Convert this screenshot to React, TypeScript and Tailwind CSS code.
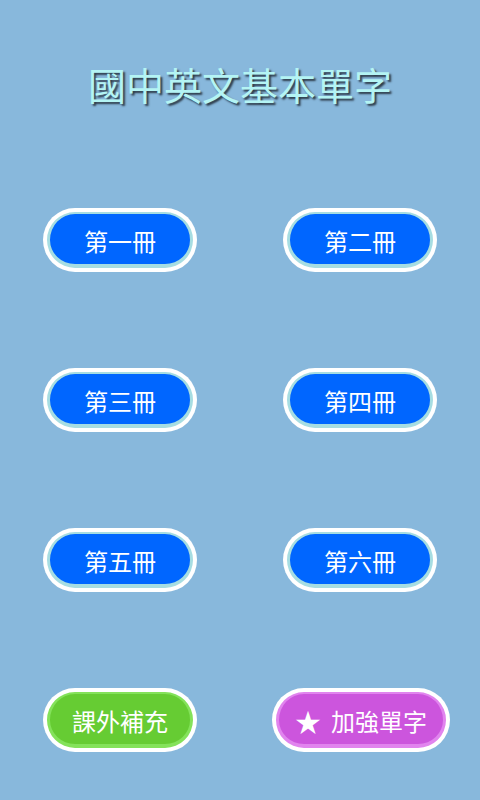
import React from 'react';

const books = ['第一冊', '第二冊', '第三冊', '第四冊', '第五冊', '第六冊'];

const PillButton = ({
  label,
  ring,
  fill,
  width = 'w-[154px]',
}: {
  label: React.ReactNode;
  ring: string;
  fill: string;
  width?: string;
}) => {
  return (
    <button className={`${width} h-[64px] rounded-full bg-white p-[4px]`}>
      <div
        className={`h-full w-full rounded-full border-x-[3px] border-t-[2px] border-b-[4px] ${ring} ${fill} flex items-center justify-center pt-[3px] text-white text-[24px] leading-none`}
      >
        {label}
      </div>
    </button>
  );
};

export default function App() {
  return (
    <div
      className="w-[480px] h-[800px] bg-[#88b8dc] flex flex-col items-center overflow-hidden"
      style={{ fontFamily: '"Noto Sans CJK TC", "Noto Sans", sans-serif' }}
    >
      <h1 className="mt-[65px] h-[40px] text-[38px] leading-none text-[#b4f4f4] [text-shadow:2px_2px_2px_#2c3a48]">
        國中英文基本單字
      </h1>

      <div className="mt-[103px] grid grid-cols-2 w-full gap-y-[96px]">
        {books.map((b) => (
          <div key={b} className="flex justify-center">
            <PillButton label={b} ring="border-[#a6dde2]" fill="bg-[#0066ff]" />
          </div>
        ))}
        <div className="flex justify-center">
          <PillButton label="課外補充" ring="border-[#84e25a]" fill="bg-[#66cc33]" />
        </div>
        <div className="flex justify-center pl-[2px]">
          <PillButton
            width="w-[178px]"
            label={
              <span className="flex items-center gap-[10px]">
                <span className="text-[26px]">★</span>
                <span>加強單字</span>
              </span>
            }
            ring="border-[#e184ee]"
            fill="bg-[#cc55dd]"
          />
        </div>
      </div>
    </div>
  );
}
